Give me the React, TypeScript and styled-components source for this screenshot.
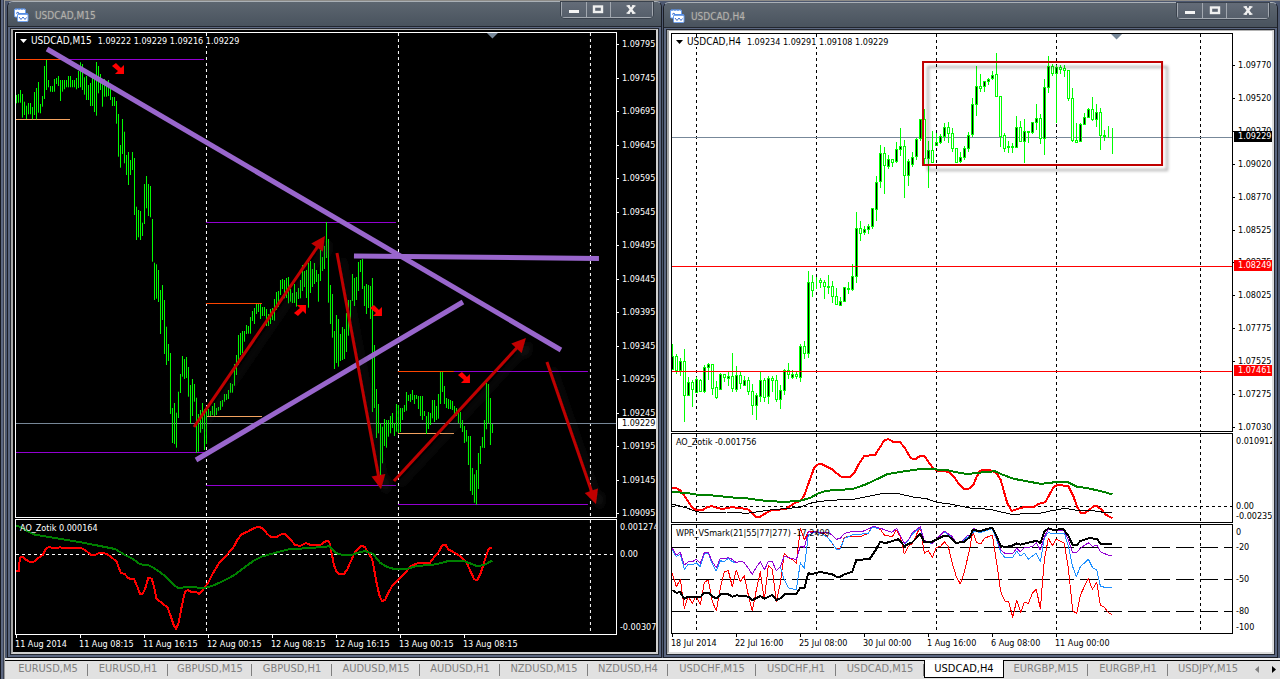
import React from "react";
import styled, { createGlobalStyle, css } from "styled-components";

const GlobalStyle = createGlobalStyle`
  *, *::before, *::after { box-sizing: border-box; }
  body {
    margin: 0;
    background: #1c1f26;
    font-family: "DejaVu Sans Condensed", "Noto Sans", sans-serif;
    font-size: 9px;
    line-height: 10px;
  }
  button { font: inherit; color: inherit; padding: 0; margin: 0; border: 0; background: none; }
`;

/* ---------- shell ---------- */

const Screen = styled.div`
  display: flex;
  height: 100vh;
  min-height: 420px;
  overflow: hidden;
`;

const Rail = styled.div`
  flex: none;
  width: 5px;
  background: linear-gradient(90deg, #17191f 0 1px, #5b6680 1px 3px, #3a4050 3px 4px, #9c9c9c 4px 5px);
`;

const Main = styled.main`
  flex: 1;
  min-width: 0;
  display: flex;
  flex-direction: column;
`;

const Desk = styled.div`
  flex: 1;
  min-height: 0;
  display: flex;
  gap: 1px;
  padding: 0 2px;
  border-top: 1px solid #8d8b87;
  background: #4d5870;
`;

const Window = styled.section<{ $grow: number; $drop?: boolean }>`
  flex: ${(p) => p.$grow} 1 0;
  min-width: 0;
  display: flex;
  flex-direction: column;
  margin-top: ${(p) => (p.$drop ? "1px" : "0")};
  border: 1px solid #1b1e26;
  border-top-color: #aab0b6;
  border-radius: 6px 6px 0 0;
  background: #5a6680;
`;

const TitleBar = styled.header`
  flex: none;
  height: 25px;
  display: flex;
  align-items: flex-start;
  padding: 0 8px 0 6px;
  border-bottom: 1px solid #23272f;
  border-radius: 5px 5px 0 0;
  background: linear-gradient(#5d6670, #49535e);
`;

const Title = styled.h2`
  flex: 1;
  margin: 7px 0 0 6px;
  font-size: 10px;
  line-height: 13px;
  font-weight: 400;
  color: #b4b2ae;
  text-shadow: 0 0 2px #8b8b88;
`;

const TitleIcon = styled.svg`
  margin-top: 6px;
`;

const Controls = styled.div`
  display: flex;
  height: 16px;
  border: 1px solid #a2a8b0;
  border-top: 0;
  border-radius: 0 0 4px 4px;
  box-shadow: 0 0 0 1px #3a424d;
`;

const ControlButton = styled.button<{ $wide?: boolean }>`
  width: ${(p) => (p.$wide ? "42px" : "24px")};
  display: flex;
  align-items: center;
  justify-content: center;
  background: linear-gradient(#646c78, #565f6b);
  & + & { border-left: 1px solid #a2a8b0; }
`;

const Client = styled.div`
  flex: 1;
  min-height: 0;
  display: flex;
  margin: 1px 2px 2px;
  border: 1px solid #23272f;
  & > div { flex: 1; }
`;

/* ---------- chart grid ---------- */

const ink = (dark?: boolean) => (dark ? "#fff" : "#000");
const paper = (dark?: boolean) => (dark ? "#000" : "#fff");

const Sheet = styled.div<{ $dark?: boolean; $rows: string }>`
  min-width: 0;
  display: grid;
  grid-template-columns: minmax(0, 1fr) 39px;
  grid-template-rows: ${(p) => p.$rows};
  row-gap: 1px;
  padding: 2px 0 0 2px;
  border: 2px solid ${(p) => (p.$dark ? "#d0d0d0" : "#dcdcdc")};
  border-top: 1px solid #b4b4b4;
  border-left-color: #a6a6a6;
  background: ${(p) => paper(p.$dark)};
  color: ${(p) => ink(p.$dark)};
`;

const Plot = styled.div`
  position: relative;
  min-height: 0;
  border: 1px solid currentColor;
`;

const Drawing = styled.svg`
  display: block;
  width: 100%;
  height: 100%;
  overflow: hidden;
`;

const Caption = styled.div<{ $fill?: string }>`
  position: absolute;
  top: 3px;
  left: 4px;
  display: flex;
  align-items: center;
  white-space: pre;
  background: ${(p) => p.$fill ?? "none"};
`;

const SymbolName = styled.span`
  margin: 0 6px 0 4px;
  font-size: 10px;
`;

const Scale = styled.div<{ $top: number; $bottom?: number }>`
  position: relative;
  min-height: 0;
  display: flex;
  flex-direction: column;
  justify-content: space-between;
  padding-top: ${(p) => p.$top}px;
  padding-bottom: ${(p) => p.$bottom ?? 0}px;
  overflow: hidden;
`;

const ScaleLabel = styled.div<{ $grow?: number; $flush?: boolean }>`
  flex: ${(p) => p.$grow ?? 0} 0 auto;
  display: flex;
  align-items: flex-start;
  height: 10px;
  white-space: nowrap;
  padding-left: ${(p) => (p.$flush ? "3px" : "0")};
  ${(p) =>
    !p.$flush &&
    css`
      &::before {
        content: "";
        width: 2px;
        height: 1px;
        margin: 5px 3px 0 0;
        background: currentColor;
      }
    `}
`;

const PriceTag = styled.div<{ $top: number; $bg: string; $fg: string }>`
  position: absolute;
  top: ${(p) => p.$top}%;
  left: 1px;
  right: 0;
  height: 11px;
  padding-left: 4px;
  background: ${(p) => p.$bg};
  color: ${(p) => p.$fg};
`;

const TimeAxis = styled.div<{ $count: number; $rest: number; $tall?: boolean }>`
  grid-column: 1 / -1;
  display: grid;
  grid-template-columns: repeat(${(p) => p.$count}, minmax(0, 64fr)) minmax(0, ${(p) => p.$rest}fr);
  height: ${(p) => (p.$tall ? "18px" : "17px")};
  margin-top: -1px;
`;

const TimeLabel = styled.div`
  white-space: nowrap;
  &::before {
    content: "";
    display: block;
    width: 1px;
    height: 3px;
    margin: 0 0 1px 1px;
    background: currentColor;
  }
`;

/* ---------- workbook tabs ---------- */

const TabBar = styled.nav`
  flex: none;
  display: flex;
  height: 21px;
  padding-left: 3px;
  border-top: 2px solid #f2f2f2;
  background: linear-gradient(#000 0 1px, #e1e1e1 1px);
  font-size: 11px;
  line-height: 18px;
  color: #808080;
`;

const Tab = styled.button<{ $width: number; $active?: boolean }>`
  flex: 0 1 ${(p) => p.$width}px;
  min-width: 0;
  height: 18px;
  white-space: nowrap;
  ${(p) =>
    p.$active
      ? css`
          border: 1px solid #000;
          border-top: 0;
          background: #fff;
          color: #000;
        `
      : css`
          background: linear-gradient(#808080, #808080) right 4px / 1px 12px no-repeat;
        `}
  &:last-of-type { background: none; }
`;

const TabScroll = styled.div`
  flex: 1;
  display: flex;
  justify-content: flex-end;
  gap: 9px;
  padding-right: 2px;
`;

const ScrollButton = styled.button`
  width: 8px;
  height: 19px;
  display: flex;
  align-items: center;
  justify-content: center;
`;

/* ---------- data ---------- */

/* Samples are kept in thirds of a chart unit, relative to the given origin. */
const UNIT = 3;

type Range = [number, number];

const m15Open: Range[] = [
  [285, 310], [282, 308], [270, 308], [282, 353], [305, 345], [317, 357], [309, 343], [309, 343], [321, 358], [276, 345],
  [264, 358], [246, 338], [312, 340], [288, 320], [198, 297], [180, 270], [240, 262], [258, 275], [258, 276], [237, 275],
  [234, 252], [228, 258], [240, 303], [240, 275], [240, 268], [240, 262], [228, 262], [228, 262], [240, 262], [240, 262],
  [234, 268], [213, 264], [187, 262], [192, 270], [232, 284], [228, 300], [255, 300], [249, 318], [231, 318], [222, 336],
  [186, 347], [198, 280], [222, 270], [240, 320], [237, 290], [246, 290], [240, 288], [262, 300], [291, 318], [291, 318],
  [303, 371], [342, 470], [435, 503], [357, 462], [395, 490], [465, 525], [456, 555], [480, 525], [456, 510], [474, 645],
  [620, 720], [630, 712], [633, 720], [668, 708], [552, 672], [528, 625], [552, 648], [558, 652],
];

const m15Rest: Range[] = [
  [27, 155], [158, 270], [163, 266], [180, 276], [240, 372], [225, 330], [270, 432], [350, 465], [402, 453], [429, 612],
  [594, 699], [579, 702], [608, 713], [545, 624], [492, 549], [438, 500], [447, 507], [441, 504], [471, 560], [525, 640],
  [507, 618], [522, 575], [563, 728], [612, 725], [600, 668], [579, 657], [597, 720], [593, 702], [597, 618], [603, 618],
  [588, 615], [579, 618], [594, 615], [591, 602], [573, 600], [570, 590], [552, 575], [552, 570], [540, 567], [519, 548],
  [522, 548], [462, 527], [435, 495], [375, 465], [369, 435], [363, 430], [363, 395], [345, 372], [348, 371], [321, 371],
  [303, 333], [294, 342], [282, 312], [282, 306], [282, 327], [291, 318], [291, 318], [297, 348], [312, 348], [297, 342],
  [294, 330], [267, 332], [246, 300], [243, 291], [210, 255], [207, 237], [210, 265], [204, 264], [201, 280], [237, 275],
  [249, 279], [222, 279], [246, 290], [234, 267], [210, 265], [165, 243], [183, 231], [180, 264], [158, 293], [153, 249],
  [177, 231], [159, 222], [180, 216], [192, 275], [120, 213], [141, 183], [108, 177], [36, 144], [87, 278], [225, 342],
  [252, 383], [363, 477], [315, 459], [327, 470], [372, 453], [351, 450], [357, 447], [309, 426], [270, 377], [270, 330],
  [192, 273], [204, 288], [201, 270], [156, 243], [150, 186], [147, 237], [228, 288], [222, 312], [225, 294], [228, 327],
  [204, 606], [405, 594], [537, 684], [582, 670], [640, 795], [650, 760], [627, 708], [630, 713], [630, 680], [618, 670],
  [609, 654], [640, 678], [582, 665], [585, 669], [594, 666], [594, 630], [585, 606], [546, 602], [555, 573], [552, 576],
  [540, 570], [555, 582], [555, 567], [558, 597], [558, 618], [558, 630], [603, 618], [618, 672], [606, 657], [609, 645],
  [570, 625], [570, 636], [588, 630], [552, 626], [486, 582], [486, 546], [528, 582], [564, 594], [567, 597], [570, 597],
  [573, 600], [588, 612], [594, 618], [603, 640], [606, 654], [630, 666], [648, 699], [660, 695], [678, 765], [678, 843],
  [774, 855], [793, 878], [780, 884], [729, 837], [708, 762], [681, 713], [630, 714], [519, 658], [522, 640], [564, 705],
  [642, 669],
];

/* high, body top, body bottom, low, rising */
type Candle = [number, number, number, number, 0 | 1];

const h4Early: Candle[] = [
  [402, 438, 480, 480, 1], [432, 438, 484, 492, 0], [444, 454, 484, 498, 1], [417, 454, 557, 636, 0], [501, 516, 557, 557, 1],
  [510, 516, 540, 591, 0], [501, 507, 548, 548, 1], [507, 510, 545, 545, 0], [465, 471, 545, 549, 1], [459, 462, 473, 510, 1],
  [462, 463, 537, 555, 0], [513, 531, 564, 567, 0], [489, 492, 540, 540, 1], [492, 493, 503, 516, 0], [486, 498, 506, 528, 1],
  [429, 498, 537, 546, 0], [468, 495, 540, 546, 1], [486, 496, 521, 537, 0], [498, 510, 527, 527, 1], [501, 510, 545, 555, 0],
  [522, 543, 587, 615, 0], [549, 555, 587, 630, 1], [486, 510, 560, 576, 1], [504, 510, 563, 576, 0], [498, 504, 560, 582, 1],
  [498, 504, 513, 546, 0], [495, 510, 570, 576, 0], [525, 540, 570, 597, 1], [477, 480, 543, 555, 1], [459, 480, 495, 507, 0],
  [480, 492, 503, 507, 1], [486, 492, 500, 507, 0], [402, 408, 503, 516, 1], [393, 408, 432, 447, 0], [183, 216, 432, 444, 1],
  [195, 216, 243, 261, 0], [201, 210, 212, 237, 0], [204, 210, 219, 234, 0], [210, 216, 231, 267, 0], [195, 228, 234, 252, 0],
  [213, 228, 261, 279, 0], [234, 258, 285, 285, 0], [261, 273, 288, 288, 1], [231, 231, 276, 276, 1], [216, 234, 239, 252, 1],
  [162, 198, 240, 243, 1], [6, 54, 201, 219, 1], [33, 54, 72, 93, 0], [48, 57, 69, 75, 1], [42, 48, 60, 72, 1],
  [-6, -5, 50, 57, 1], [-102, -83, -1, 33, 1],
];

const h4Late: Candle[] = [
  [435, 460, 545, 563, 1], [441, 460, 497, 581, 0], [465, 477, 500, 507, 1], [477, 478, 488, 500, 0], [426, 447, 486, 490, 1],
  [384, 438, 449, 467, 1], [420, 438, 527, 594, 0], [477, 484, 527, 558, 1], [455, 472, 494, 500, 1], [415, 418, 472, 480, 1],
  [357, 358, 418, 424, 1], [327, 358, 476, 492, 0], [424, 450, 476, 563, 1], [393, 451, 488, 490, 0], [400, 427, 437, 437, 1],
  [402, 408, 430, 432, 1], [369, 381, 410, 424, 1], [366, 381, 402, 430, 0], [384, 400, 448, 455, 0], [444, 445, 488, 490, 0],
  [456, 471, 485, 488, 1], [438, 444, 474, 480, 1], [396, 405, 446, 455, 1], [294, 312, 405, 412, 1], [198, 259, 314, 347, 1],
  [222, 258, 266, 275, 0], [242, 243, 260, 276, 1], [234, 237, 245, 254, 1], [213, 225, 238, 240, 1], [159, 223, 290, 292, 0],
  [288, 289, 410, 442, 0], [400, 405, 447, 456, 0], [424, 440, 444, 458, 1], [430, 440, 444, 458, 1], [348, 381, 443, 445, 1],
  [363, 381, 425, 425, 0], [357, 393, 425, 489, 1], [393, 394, 398, 430, 1], [366, 367, 398, 402, 1], [312, 354, 368, 390, 1],
  [342, 354, 416, 432, 0], [237, 262, 416, 465, 1], [168, 199, 263, 279, 1], [192, 199, 221, 228, 0], [195, 201, 223, 370, 1],
  [195, 201, 209, 222, 0], [195, 205, 214, 232, 0], [210, 211, 297, 303, 0], [264, 295, 422, 425, 0], [370, 421, 428, 430, 0],
  [369, 373, 425, 427, 1], [339, 351, 374, 376, 1], [324, 327, 353, 355, 1], [291, 328, 359, 363, 0], [312, 336, 359, 380, 1],
  [324, 337, 407, 450, 0], [390, 407, 411, 422, 0], [378, 408, 412, 413, 1], [384, 408, 411, 462, 0],
];

const curves = {
  m15Red: [
    "49,453 56,453 58,430 62,410 68,410 75,418 92,427 104,424 112,416 128,405 138,386 148,380 158,385 170,385 180,381 190,385 245,385 258,392 272,404 285,405 300,398 318,401 330,408 350,425 362,458 375,463 385,475 403,478 412,500 420,521 428,521 436,505 445,474 455,476 462,500 470,538 485,548 503,563 512,588 522,618 528,626 535,612 545,560 555,515 563,510 572,515 588,515 598,523 610,508 625,488 640,458 660,425 680,405 700,383 712,360 725,343 745,334 765,323 778,320 790,327 800,340 812,351 830,351 845,342 855,343 868,355 885,374 900,378 918,369 930,374 960,376 970,368 980,363 988,365",
    "0,378 5,400 12,435 20,455 28,462 42,462 52,448 62,425 75,395 90,380 97,377 105,382 115,398 127,418 133,450 140,490 148,525 156,543 165,540 175,518 190,493 205,480 225,460 240,440 262,430 300,428 312,412 325,398 337,376 347,375 355,388 375,399 395,412 410,428 422,455 433,478 442,480 452,460 465,420 475,388 482,384 487,386",
  ],
  m15Green: [
    "49,318 60,320 80,332 100,343 130,348 160,353 200,360 250,368 300,378 345,387 370,402 400,418 420,433 445,435 465,446 490,464 510,482 525,498 535,504 575,500 600,504 625,502 645,494 670,483 700,467 730,445 760,423 785,410 810,403 850,392 870,387 920,385 988,379",
    "0,381 20,400 40,405 65,405 80,399 105,393 130,402 150,428 170,440 190,446 230,447 260,438 310,434 330,430 355,423 400,423 420,430 440,438 460,436 487,422",
  ],
  h4Red: [
    "37,204 50,205 62,212 75,230 90,253 100,266 112,271 128,270 140,262 155,258 170,263 185,267 200,265 215,261 235,264 262,267 278,280 288,290 300,290 315,281 330,272 345,269 375,268 390,258 408,247 420,243 432,228 442,200 452,172 462,145 472,134 483,131 495,137 515,147 530,160 545,171 570,171 582,160 595,135 612,108 645,105 660,82 672,62 685,57 700,66 720,66 735,85 752,115 765,118 780,108 792,107 805,125 820,145 832,152 865,155 880,168 895,190 910,206 925,207",
    "0,203 10,195 20,170 30,152 45,149 65,152 80,160 92,180 102,215 112,250 125,273 140,268 160,262 190,262 205,252 225,247 238,225 250,202 262,195 295,198 310,228 322,262 332,278 345,278 358,270 370,259 382,259 395,270 408,284 427,295",
  ],
  h4Green: [
    "37,216 80,219 110,224 170,227 210,232 260,235 300,241 370,246 420,242 450,234 475,220 500,212 540,210 580,206 615,194 650,178 680,163 720,156 780,147 820,148 860,150 890,157 920,162",
    "0,161 20,159 45,156 75,154 95,163 130,176 170,184 210,191 235,190 260,185 295,187 320,200 355,205 390,213 427,223",
  ],
  h4Black: [
    "37,253 60,258 80,264 110,275 140,279 200,276 260,280 330,270 420,262 450,250 480,244 530,240 580,238 620,230 670,220 710,220 760,231 800,236 830,247 870,252 910,260",
    "0,264 60,268 90,275 125,283 210,280 245,272 285,265 320,271 370,272 400,277 427,277",
  ],
  wprViolet: [
    "37,385 49,405 61,397 73,435 85,425 97,425 109,418 121,430 133,398 145,398 157,425 169,443 181,415 193,417 205,413 217,418 229,428 241,423 253,428 265,445 277,463 289,442 301,425 313,450 325,425 337,425 349,452 361,440 373,408 385,413 397,415 409,420 421,378 433,382 445,335 457,338 469,334 481,340 493,336 505,338 517,345 529,358 541,355 553,340 565,338 577,333 605,335 630,325 640,318 670,328 695,337 710,325 733,370 745,360 757,338 781,320 793,362 805,365 817,371 829,358 853,333 877,350 889,368 901,368 925,345",
    "0,345 10,325 25,333 40,330 67,325 80,355 92,390 104,400 128,400 140,385 151,395 163,383 187,380 199,368 211,390 223,350 235,328 283,333 295,360 307,397 320,397 331,385 355,368 368,380 380,375 391,395 415,406 427,407",
  ],
  wprBlue: [
    "37,390 49,410 61,402 73,448 85,432 97,435 109,428 121,440 133,402 145,400 157,432 169,453 181,422 193,425 205,415 217,425 229,428 241,423 253,428 265,445 277,463 289,442 301,425 313,450 325,425 337,425 349,452 361,440 373,480 385,503 409,510 421,428 433,445 445,345 469,335 493,345 505,355 517,370 529,387 541,387 553,355 577,345 605,342 625,340 637,322 670,328 695,337 710,325 733,372 745,360 757,342 781,324 793,365 817,371 829,358 853,336 877,352 889,368 901,368 925,350",
    "0,350 12,333 30,338 67,326 80,360 92,398 104,412 128,412 140,393 151,408 163,400 175,418 187,408 199,400 211,425 223,355 235,337 247,342 283,340 295,378 307,437 319,470 331,440 355,418 368,444 380,450 391,498 403,502 427,502",
  ],
  wprRed: [
    "37,460 49,500 61,478 73,565 85,530 97,550 109,528 121,555 133,487 145,480 157,545 169,572 181,505 193,455 205,452 217,500 229,450 241,485 253,467 265,525 277,572 289,510 301,455 313,540 325,437 337,447 349,545 361,490 373,400 385,413 397,418 409,430 421,325 433,360 445,335 469,336 493,340 505,355 529,387 541,385 553,352 577,348 605,348 625,340 637,320 661,328 673,345 697,350 709,330 721,350 733,402 745,380 757,370 781,320 793,400 805,392 817,412 829,382 841,380 853,365 865,380 877,430 889,470 901,492 913,455 925,405",
    "0,380 8,335 20,368 32,372 43,355 67,345 80,430 92,515 104,543 116,545 128,592 140,540 152,577 163,547 175,550 187,520 199,508 211,567 223,420 235,355 247,377 259,357 283,370 295,445 308,573 320,580 331,525 355,475 367,508 380,487 391,555 403,562 415,578 425,583",
  ],
  wprBlack: [
    "37,510 49,518 61,517 73,536 85,530 121,532 133,518 145,518 157,530 169,535 181,523 205,523 217,530 229,526 265,530 277,540 301,528 313,536 337,525 349,540 361,535 373,523 409,521 421,503 433,505 445,460 457,462 481,456 517,463 529,470 541,470 553,463 577,455 589,420 629,417 647,390 661,365 675,370 715,358 733,378 757,367 781,342 793,367 817,365 853,347 865,348 889,369 913,365 925,355",
    "0,350 8,330 30,333 67,323 80,350 92,378 104,381 125,378 140,370 151,374 200,362 211,370 223,335 235,325 250,330 280,327 295,347 308,375 320,375 331,363 355,355 380,356 391,371 427,372",
  ],
};

const tabs: { name: string; width: number; active?: boolean }[] = [
  { name: "EURUSD,M5", width: 80 },
  { name: "EURUSD,H1", width: 80 },
  { name: "GBPUSD,M15", width: 84 },
  { name: "GBPUSD,H1", width: 80 },
  { name: "AUDUSD,M15", width: 88 },
  { name: "AUDUSD,H1", width: 80 },
  { name: "NZDUSD,M15", width: 88 },
  { name: "NZDUSD,H4", width: 80 },
  { name: "USDCHF,M15", width: 88 },
  { name: "USDCHF,H1", width: 80 },
  { name: "USDCAD,M15", width: 88 },
  { name: "USDCAD,H4", width: 80, active: true },
  { name: "EURGBP,M15", width: 84 },
  { name: "EURGBP,H1", width: 80 },
  { name: "USDJPY,M15", width: 80 },
];

/* ---------- drawing parts ---------- */

const shift = (raw: string, x: number, y: number) =>
  raw
    .split(" ")
    .map((pair) => {
      const [a, b] = pair.split(",").map(Number);
      return `${(x + a / UNIT).toFixed(1)},${(y + b / UNIT).toFixed(1)}`;
    })
    .join(" ");

function Curve({ parts, left, right, color, width = 1 }: { parts: string[]; left: number; right: number; color: string; width?: number }) {
  return (
    <polyline
      points={`${shift(parts[0], left, 420)} ${shift(parts[1], right, 420)}`}
      fill="none"
      stroke={color}
      strokeWidth={width}
      strokeLinejoin="round"
      shapeRendering="crispEdges"
    />
  );
}

function Bars({ data, x, y }: { data: Range[]; x: number; y: number }) {
  const d = data.map(([hi, lo], i) => `M${x + i * 2 + 0.5} ${(y + hi / UNIT).toFixed(1)}V${(y + lo / UNIT).toFixed(1)}`).join("");
  return <path d={d} stroke="#00ff00" fill="none" shapeRendering="crispEdges" />;
}

function Candles({ data, x, y }: { data: Candle[]; x: number; y: number }) {
  return (
    <g stroke="#00ff00" shapeRendering="crispEdges">
      {data.map(([hi, top, bottom, lo, up], i) => {
        const c = x + i * 4 + 0.5;
        const t = Math.floor(y + top / UNIT) + 0.5;
        const b = Math.max(t, Math.round(y + bottom / UNIT) - 0.5);
        return (
          <g key={i}>
            <line x1={c} x2={c} y1={Math.round(y + hi / UNIT)} y2={Math.round(y + lo / UNIT)} />
            <rect x={c - 1} y={t} width={2} height={b - t} fill={up ? "#000" : "#fff"} />
          </g>
        );
      })}
    </g>
  );
}

function Dividers({ xs, top, bottom, color }: { xs: number[]; top: number; bottom: number; color: string }) {
  return (
    <g stroke={color} strokeDasharray="3 3" shapeRendering="crispEdges">
      {xs.map((x) => (
        <line key={x} x1={x + 0.5} x2={x + 0.5} y1={top} y2={bottom} />
      ))}
    </g>
  );
}

function Level({ y, from, to, color, dash }: { y: number; from: number; to: number; color: string; dash?: string }) {
  return <line x1={from} x2={to} y1={y + 0.5} y2={y + 0.5} stroke={color} strokeDasharray={dash} shapeRendering="crispEdges" />;
}

function BigArrow({ from, to }: { from: [number, number]; to: [number, number] }) {
  const dx = to[0] - from[0];
  const dy = to[1] - from[1];
  const len = Math.hypot(dx, dy);
  const ux = dx / len;
  const uy = dy / len;
  const bx = to[0] - ux * 14;
  const by = to[1] - uy * 14;
  return (
    <g fill="#c00000" stroke="none">
      <line x1={from[0]} y1={from[1]} x2={bx + ux} y2={by + uy} stroke="#c00000" strokeWidth={3} />
      <polygon points={`${to[0]},${to[1]} ${bx - uy * 7},${by + ux * 7} ${bx + uy * 7},${by - ux * 7}`} />
    </g>
  );
}

function Signal({ x, y, up }: { x: number; y: number; up?: boolean }) {
  return (
    <path
      d="M0 0V-9L-3 -6L-8 -11L-12 -8L-6 -3L-9 0Z"
      transform={`translate(${x} ${y})${up ? " scale(1 -1)" : ""}`}
      fill="#ff0000"
    />
  );
}

const VIOLET = "#9400d3";
const ORANGE = "#ff4500";
const SAND = "#f4a460";
const SLATE = "#778899";

function WindowIcon() {
  return (
    <TitleIcon width="15" height="15" viewBox="0 0 15 15" aria-hidden="true">
      <rect x="0.5" y="1" width="11" height="8" rx="1" fill="#fff" stroke="#6ea0ee" />
      <path d="M1 1H11" stroke="#4d86e0" strokeDasharray="2 1" />
      <path d="M2 5.500L4 4L5 6" stroke="#3c6fd0" fill="none" />
      <rect x="3.5" y="5.500" width="10.500" height="8" rx="1" fill="#fff" stroke="#6ea0ee" />
      <path d="M4 6H14" stroke="#4d86e0" strokeWidth="1.500" />
      <path d="M5 9L7 11.500L9 9L11 11.500L12.500 9.500" stroke="#3c6fd0" fill="none" />
    </TitleIcon>
  );
}

function WindowTitle({ name }: { name: string }) {
  return (
    <TitleBar>
      <WindowIcon />
      <Title>{name}</Title>
      <Controls>
        <ControlButton aria-label="Minimize">
          <svg width="12" height="9" viewBox="0 0 12 9">
            <rect x="1" y="5" width="10" height="3" fill="#f4f4f4" />
          </svg>
        </ControlButton>
        <ControlButton aria-label="Maximize">
          <svg width="12" height="9" viewBox="0 0 12 9">
            <rect x="2" y="1.5" width="8" height="5.500" fill="none" stroke="#f0f0f0" strokeWidth="2.4" />
          </svg>
        </ControlButton>
        <ControlButton aria-label="Close" $wide>
          <svg width="12" height="9" viewBox="0 0 12 9">
            <path d="M3 0.5L9 8.5M9 0.5L3 8.5" stroke="#f0f0f0" strokeWidth="2.4" />
            <path d="M1.500 0.8H5M7 0.8H10.500M1.500 8.2H5M7 8.2H10.500" stroke="#f0f0f0" strokeWidth="1.2" />
          </svg>
        </ControlButton>
      </Controls>
    </TitleBar>
  );
}

function ChartCaption({ symbol, quotes, fill }: { symbol: string; quotes: string; fill: string }) {
  return (
    <Caption $fill={fill}>
      <svg width="7" height="4" viewBox="0 0 7 4" aria-hidden="true">
        <path d="M0 0H7L3.5 4Z" fill="currentColor" />
      </svg>
      <SymbolName>{symbol}</SymbolName>
      <span>{quotes}</span>
    </Caption>
  );
}

const prices = (list: string) => list.split(" ").map((p) => <ScaleLabel key={p}>{p}</ScaleLabel>);

function M15Chart() {
  return (
    <Sheet $dark $rows="minmax(0, 486fr) minmax(0, 116fr) auto">
      <Plot>
        <Drawing viewBox="16 33 600 484" preserveAspectRatio="none">
          <Dividers xs={[206, 398, 590]} top={33} bottom={517} color="#fff" />
          <Level y={423} from={16} to={616} color={SLATE} />
          <Level y={59} from={16} to={68} color={ORANGE} />
          <Level y={59} from={68} to={204} color={VIOLET} />
          <Level y={119} from={16} to={70} color={SAND} />
          <Level y={452} from={16} to={206} color={VIOLET} />
          <Level y={222} from={206} to={396} color={VIOLET} />
          <Level y={303} from={206} to={262} color={ORANGE} />
          <Level y={416} from={206} to={262} color={SAND} />
          <Level y={485} from={206} to={396} color={VIOLET} />
          <Level y={371} from={398} to={454} color={ORANGE} />
          <Level y={371} from={454} to={588} color={VIOLET} />
          <Level y={433} from={398} to={454} color={SAND} />
          <Level y={504} from={398} to={588} color={VIOLET} />
          <Bars data={m15Open} x={16} y={0} />
          <Bars data={m15Rest} x={152} y={210} />
          <path d="M487 33H498L492.500 38.500Z" fill={SLATE} />
          <Signal x={124} y={74} />
          <Signal x={306} y={305} up />
          <Signal x={382} y={316} />
          <Signal x={470} y={383} />
          <g stroke="#9966cc" strokeWidth={5}>
            <line x1={47} y1={49} x2={561} y2={350} />
            <line x1={196} y1={460} x2={463} y2={302} />
            <line x1={354} y1={256} x2={599} y2={258.5} />
          </g>
          <g filter="url(#arrowShade)">
            <BigArrow from={[194, 427]} to={[325, 236]} />
            <BigArrow from={[337, 253]} to={[381, 489]} />
            <BigArrow from={[394, 481]} to={[526, 338]} />
            <BigArrow from={[547, 362]} to={[596, 504]} />
          </g>
          <filter id="arrowShade" x="-10%" y="-10%" width="120%" height="120%">
            <feDropShadow dx="6" dy="5" stdDeviation="3" floodColor="#303030" floodOpacity="0.4" />
          </filter>
        </Drawing>
        <ChartCaption symbol="USDCAD,M15" quotes="1.09222 1.09229 1.09216 1.09229" fill="#000" />
      </Plot>
      <Scale $top={7}>
        {prices("1.09795 1.09745 1.09695 1.09645 1.09595 1.09545 1.09495 1.09445 1.09395 1.09345 1.09295 1.09245 1.09195 1.09145 1.09095")}
        <PriceTag $top={79.4} $bg="#fff" $fg="#000">1.09229</PriceTag>
      </Scale>
      <Plot>
        <Drawing viewBox="16 520 600 114" preserveAspectRatio="none">
          <Dividers xs={[206, 398, 590]} top={520} bottom={634} color="#fff" />
          <Level y={554} from={16} to={616} color="#fff" dash="3 3" />
          <Curve parts={curves.m15Red} left={0} right={330} color="#ff0000" width={2} />
          <Curve parts={curves.m15Green} left={0} right={330} color="#008000" width={2} />
        </Drawing>
        <Caption>AO_Zotik 0.000164</Caption>
      </Plot>
      <Scale $top={3} $bottom={3}>
        <ScaleLabel $flush $grow={17}>0.001274</ScaleLabel>
        <ScaleLabel $flush $grow={63}>0.00</ScaleLabel>
        <ScaleLabel $flush>-0.00307</ScaleLabel>
      </Scale>
      <TimeAxis $count={8} $rest={129}>
        {["11 Aug 2014", "11 Aug 08:15", "11 Aug 16:15", "12 Aug 00:15", "12 Aug 08:15", "12 Aug 16:15", "13 Aug 00:15", "13 Aug 08:15"].map((t) => (
          <TimeLabel key={t}>{t}</TimeLabel>
        ))}
      </TimeAxis>
    </Sheet>
  );
}

function H4Chart() {
  const days = [696, 816, 936, 1056, 1200];
  return (
    <Sheet $rows="minmax(0, 399fr) minmax(0, 90fr) minmax(0, 110fr) auto">
      <Plot>
        <Drawing viewBox="672 34 560 397" preserveAspectRatio="none">
          <Dividers xs={days} top={34} bottom={431} color="#000" />
          <Level y={137} from={672} to={1232} color={SLATE} />
          <Candles data={h4Early} x={672} y={210} />
          <Candles data={h4Late} x={880} y={0} />
          <Level y={266} from={672} to={1232} color="#ff0000" />
          <Level y={371} from={672} to={1232} color="#ff0000" />
          <path d="M1111 34H1122L1116.500 39.500Z" fill={SLATE} />
          <filter id="boxShade" x="-5%" y="-5%" width="115%" height="120%">
            <feDropShadow dx="5" dy="5" stdDeviation="1.500" floodColor="#000" floodOpacity="0.32" />
          </filter>
          <rect x={923} y={62} width={239} height={103} fill="none" stroke="#c00000" strokeWidth={2} filter="url(#boxShade)" />
        </Drawing>
        <ChartCaption symbol="USDCAD,H4" quotes="1.09234 1.09291 1.09108 1.09229" fill="#fff" />
      </Plot>
      <Scale $top={27}>
        {prices("1.09770 1.09520 1.09270 1.09020 1.08770 1.08525 1.08275 1.08025 1.07775 1.07525 1.07275 1.07030")}
        <PriceTag $top={24.6} $bg="#000" $fg="#fff">1.09229</PriceTag>
        <PriceTag $top={56.9} $bg="#ff0000" $fg="#fff">1.08249</PriceTag>
        <PriceTag $top={83.2} $bg="#ff0000" $fg="#fff">1.07461</PriceTag>
      </Scale>
      <Plot>
        <Drawing viewBox="672 434 560 88" preserveAspectRatio="none">
          <Dividers xs={days} top={434} bottom={522} color="#000" />
          <Level y={506} from={672} to={1232} color="#000" dash="3 3" />
          <Curve parts={curves.h4Red} left={660} right={970} color="#ff0000" width={2} />
          <Curve parts={curves.h4Green} left={660} right={970} color="#008000" width={2} />
          <Curve parts={curves.h4Black} left={660} right={970} color="#000" />
        </Drawing>
        <Caption>AO_Zotik -0.001756</Caption>
      </Plot>
      <Scale $top={3} $bottom={2}>
        <ScaleLabel $flush $grow={55}>0.010912</ScaleLabel>
        <ScaleLabel $flush>0.00</ScaleLabel>
        <ScaleLabel $flush>-0.00235</ScaleLabel>
      </Scale>
      <Plot>
        <Drawing viewBox="672 525 560 108" preserveAspectRatio="none">
          <Dividers xs={days} top={525} bottom={633} color="#000" />
          <Level y={547} from={672} to={1232} color="#000" dash="18 6" />
          <Level y={579} from={672} to={1232} color="#000" dash="18 6" />
          <Level y={611} from={672} to={1232} color="#000" dash="18 6" />
          <Curve parts={curves.wprRed} left={660} right={970} color="#ff0000" />
          <Curve parts={curves.wprBlue} left={660} right={970} color="#1e90ff" />
          <Curve parts={curves.wprViolet} left={660} right={970} color={VIOLET} />
          <Curve parts={curves.wprBlack} left={660} right={970} color="#000" width={2} />
        </Drawing>
        <Caption>WPR_VSmark(21|55|77|277) -17.2499</Caption>
      </Plot>
      <Scale $top={3} $bottom={2}>
        <ScaleLabel $flush $grow={5}>0</ScaleLabel>
        <ScaleLabel $flush $grow={22}>-20</ScaleLabel>
        <ScaleLabel $flush $grow={22}>-50</ScaleLabel>
        <ScaleLabel $flush $grow={6}>-80</ScaleLabel>
        <ScaleLabel $flush>-100</ScaleLabel>
      </Scale>
      <TimeAxis $count={7} $rest={153} $tall>
        {["18 Jul 2014", "22 Jul 16:00", "25 Jul 08:00", "30 Jul 00:00", "1 Aug 16:00", "6 Aug 08:00", "11 Aug 00:00"].map((t) => (
          <TimeLabel key={t}>{t}</TimeLabel>
        ))}
      </TimeAxis>
    </Sheet>
  );
}

export default function App() {
  return (
    <>
      <GlobalStyle />
      <Screen>
        <Rail />
        <Main>
          <Desk>
            <Window $grow={655}>
              <WindowTitle name="USDCAD,M15" />
              <Client>
                <M15Chart />
              </Client>
            </Window>
            <Window $grow={615} $drop>
              <WindowTitle name="USDCAD,H4" />
              <Client>
                <H4Chart />
              </Client>
            </Window>
          </Desk>
          <TabBar aria-label="Open charts">
            {tabs.map((t) => (
              <Tab key={t.name} $width={t.width} $active={t.active}>
                {t.name}
              </Tab>
            ))}
            <TabScroll>
              <ScrollButton aria-label="Scroll tabs left">
                <svg width="4" height="7" viewBox="0 0 4 7">
                  <path d="M4 0V7L0 3.500Z" fill="#808080" />
                </svg>
              </ScrollButton>
              <ScrollButton aria-label="Scroll tabs right">
                <svg width="4" height="7" viewBox="0 0 4 7">
                  <path d="M0 0V7L4 3.500Z" fill="#000" />
                </svg>
              </ScrollButton>
            </TabScroll>
          </TabBar>
        </Main>
      </Screen>
    </>
  );
}
